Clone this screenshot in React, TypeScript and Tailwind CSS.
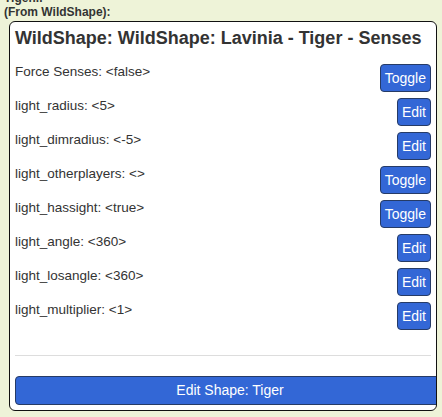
const rows: { label: string; action: "Toggle" | "Edit" }[] = [
  { label: "Force Senses: <false>", action: "Toggle" },
  { label: "light_radius: <5>", action: "Edit" },
  { label: "light_dimradius: <-5>", action: "Edit" },
  { label: "light_otherplayers: <>", action: "Toggle" },
  { label: "light_hassight: <true>", action: "Toggle" },
  { label: "light_angle: <360>", action: "Edit" },
  { label: "light_losangle: <360>", action: "Edit" },
  { label: "light_multiplier: <1>", action: "Edit" },
];

export default function App() {
  return (
    <div className="h-[417px] overflow-hidden bg-[#eef3d8] font-['Liberation_Sans',Arial,sans-serif] text-[#333]">
      <div className="mt-[-9px] pl-[4px] text-[12px] font-bold leading-[14px]">Tiger...</div>
      <div className="pl-[4px] text-[12px] font-bold leading-[14px]">(From WildShape):</div>

      <div className="mt-[2px] ml-[9px] w-[428px] overflow-hidden rounded-[6px] border border-[#111] bg-white pb-[5px]">
        <h2 className="px-[5px] pt-[5px] text-[18px] font-bold leading-[22px] text-[#333]">
          WildShape: WildShape: Lavinia - Tiger - Senses
        </h2>

        <div className="mt-[15px] flex flex-col gap-[6px] px-[5px]">
          {rows.map((row) => (
            <div key={row.label} className="flex items-start justify-between">
              <span className="text-[13.5px] leading-[16px] text-[#333]">{row.label}</span>
              <button
                type="button"
                className="h-[28px] rounded-[4px] border border-[#263b66] bg-[#3367d6] px-[4px] text-[14px] leading-[26px] text-white"
              >
                {row.action}
              </button>
            </div>
          ))}
        </div>

        <div className="mx-[5px] mt-[25px] border-t border-[#dddddd]" />

        <button
          type="button"
          className="mt-[20px] ml-[5px] block h-[29px] w-[430px] rounded-[4px] border border-[#263b66] bg-[#3367d6] text-[14px] leading-[27px] text-white"
        >
          Edit Shape: Tiger
        </button>
      </div>
    </div>
  );
}
